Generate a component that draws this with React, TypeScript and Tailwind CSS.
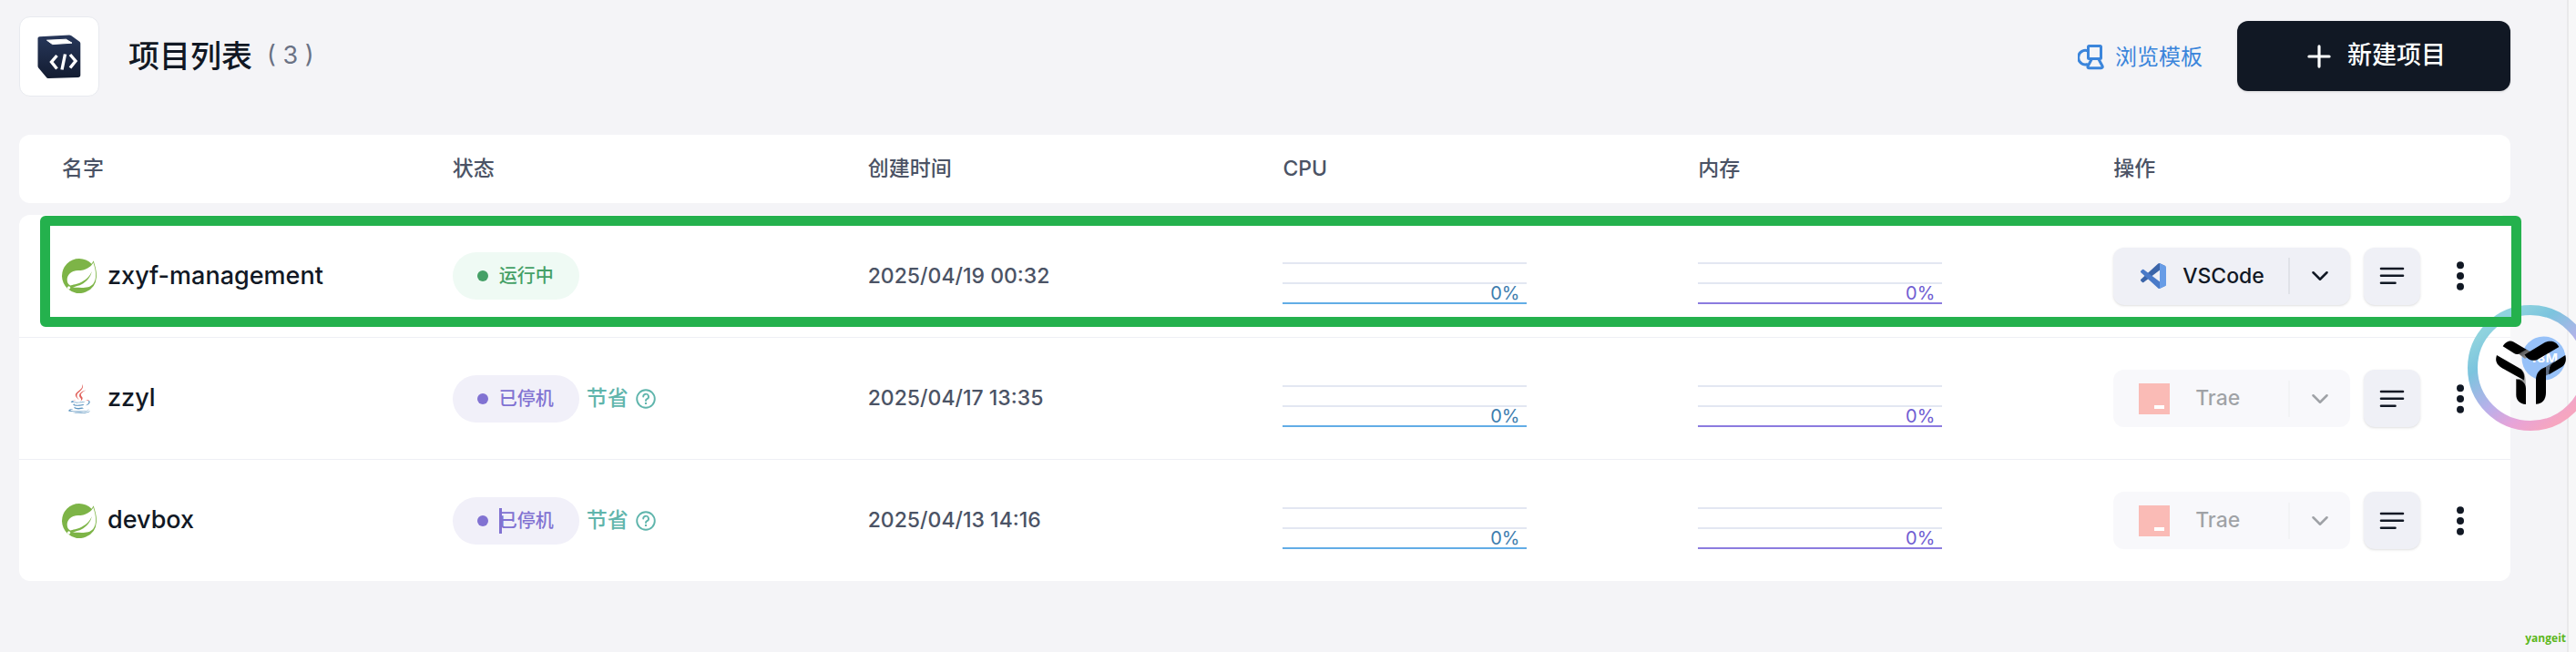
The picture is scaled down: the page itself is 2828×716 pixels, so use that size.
import { useId } from "react";
import { ChevronDown, Plus } from "lucide-react";
import { FaJava } from "react-icons/fa";
import { SiSpring } from "react-icons/si";

type Status = "running" | "stopped";
type Runtime = "spring" | "java";
type Ide = "vscode" | "trae";

interface Project {
  name: string;
  runtime: Runtime;
  status: Status;
  created: string;
  cpu: number;
  memory: number;
  ide: Ide;
  caret?: boolean;
}

const projects: Project[] = [
  { name: "zxyf-management", runtime: "spring", status: "running", created: "2025/04/19 00:32", cpu: 0, memory: 0, ide: "vscode" },
  { name: "zzyl", runtime: "java", status: "stopped", created: "2025/04/17 13:35", cpu: 0, memory: 0, ide: "trae" },
  { name: "devbox", runtime: "spring", status: "stopped", created: "2025/04/13 14:16", cpu: 0, memory: 0, ide: "trae", caret: true },
];

const columns = ["名字", "状态", "创建时间", "CPU", "内存", "操作"];

function DevboxLogo() {
  return (
    <svg viewBox="0 0 48 48" className="size-12" aria-hidden="true">
      <defs>
        <linearGradient id="devbox-face" x1="0" y1="0" x2="0" y2="1">
          <stop offset="0" stopColor="#27375a" />
          <stop offset="1" stopColor="#131c31" />
        </linearGradient>
      </defs>
      <path d="M2.5 2.200 35 .6c.9 0 1.700.2 2.400.7L46 7.400c.9.6 1.300 1.400 1.300 2.400v34.700c0 1.500-1 2.500-2.500 2.500L12.500 48c-1.300 0-2.200-.5-2.900-1.500L1.200 36.500c-.5-.7-.7-1.400-.7-2.200V4.300c0-1.200.7-2 2-2.100Z" fill="url(#devbox-face)" />
      <path d="M10.500 6.200 31.500 5.200 38 9.200 16.500 10.600Z" fill="#fff" stroke="#fff" strokeLinejoin="round" />
      <path d="m21.500 23-6 7 6 7.500M30.500 21.500l-3.500 17M36 22l6 7-6 7.500" fill="none" stroke="#fff" strokeWidth="3.400" />
    </svg>
  );
}

function TemplateIcon() {
  return (
    <svg viewBox="0 0 29 28" className="h-7 w-[29px]" fill="none" stroke="currentColor" strokeWidth="3" strokeLinejoin="round" aria-hidden="true">
      <rect x="11.500" y="1.500" width="14" height="14" rx="1" />
      <path d="m15.500 15.500-4.300 8c-.6 1.400 0 2.200 1.300 2.200h13.200c1.300 0 1.900-.9 1.300-2.200l-4.300-8" />
      <path d="M11 6.800A7.800 7.800 0 1 0 11 21.500" />
    </svg>
  );
}

function JavaIcon() {
  const id = useId();
  return (
    <>
      <svg className="absolute size-0" aria-hidden="true">
        <defs>
          <linearGradient id={id} x1="0" y1="0" x2="0" y2="1">
            <stop offset="0.550" stopColor="#e0605a" />
            <stop offset="0.550" stopColor="#5c94bf" />
          </linearGradient>
        </defs>
      </svg>
      <FaJava className="h-8 w-6" style={{ fill: `url(#${id})` }} aria-hidden="true" />
    </>
  );
}

function VSCodeIcon() {
  return (
    <svg viewBox="0 0 100 100" className="size-7" aria-hidden="true">
      <path fill="#3b65a9" d="M96.461 10.796 75.857.876a6.250 6.250 0 0 0-7.107 1.207L1.299 63.583a4.167 4.167 0 0 0 .004 6.162l5.510 5.009a4.167 4.167 0 0 0 5.321.236L93.361 13.370C96.086 11.303 100 13.246 100 16.667v-.240a6.250 6.250 0 0 0-3.539-5.631Z" />
      <path fill="#4a7ac8" d="m96.461 89.204-20.604 9.920a6.250 6.250 0 0 1-7.107-1.207L1.299 36.417a4.167 4.167 0 0 1 .004-6.162l5.510-5.009a4.167 4.167 0 0 1 5.321-.236L93.361 86.630C96.086 88.697 100 86.754 100 83.333v.240a6.250 6.250 0 0 1-3.539 5.631Z" />
      <path fill="#679ce6" d="M75.858 99.126a6.250 6.250 0 0 1-7.108-1.210c2.306 2.307 6.250.674 6.250-2.588V4.672c0-3.262-3.944-4.895-6.250-2.589a6.250 6.250 0 0 1 7.108-1.209l20.600 9.907A6.250 6.250 0 0 1 100 16.413v67.174a6.250 6.250 0 0 1-3.541 5.633Z" />
    </svg>
  );
}

function TraeIcon() {
  return (
    <svg viewBox="0 0 34 34" className="size-[34px]" aria-hidden="true">
      <rect width="34" height="34" fill="#f4584a" />
      <rect x="17" y="24" width="11" height="4" fill="#fff" />
    </svg>
  );
}

function HelpIcon() {
  return (
    <svg viewBox="0 0 22 22" className="size-[22px]" fill="none" stroke="currentColor" aria-hidden="true">
      <circle cx="11" cy="11" r="9.800" strokeWidth="1.900" />
      <path d="M8.200 8.500A2.900 2.900 0 1 1 12.300 11.200c-.9.400-1.300.9-1.300 1.900" strokeWidth="1.900" strokeLinecap="round" />
      <circle cx="11" cy="15.900" r="1.200" fill="currentColor" stroke="none" />
    </svg>
  );
}

function StatusCell({ status, caret }: { status: Status; caret?: boolean }) {
  const running = status === "running";
  return (
    <div className="flex items-center gap-2">
      <span className={`flex h-[52px] w-[139px] items-center gap-3 rounded-full pl-[27px] text-xl font-medium ${running ? "bg-[#effaf4] text-[#45a066]" : "bg-[#f1f0f9] text-[#8172d2]"}`}>
        <span className="size-3 shrink-0 rounded-full bg-current" />
        <span className="relative whitespace-nowrap">
          {caret && <span className="absolute inset-y-0 left-0 w-[3px] bg-current" />}
          {running ? "运行中" : "已停机"}
        </span>
      </span>
      {!running && (
        <span className="flex items-center gap-2 text-[23px] font-medium text-[#5fb5ac]">
          节省
          <button type="button" aria-label="说明">
            <HelpIcon />
          </button>
        </span>
      )}
    </div>
  );
}

function UsageChart({ value, tone }: { value: number; tone: "cpu" | "memory" }) {
  const cpu = tone === "cpu";
  return (
    <div className={`relative mt-4 flex h-[46px] w-[268px] flex-col justify-between ${cpu ? "text-[#3d7dae]" : "text-[#6f5dd2]"}`}>
      <span className="h-0.5 bg-[#e3e7f2]" />
      <span className="h-0.5 bg-[#e3e7f2]" />
      <span className={`h-0.5 ${cpu ? "bg-[#62ade6]" : "bg-[#8b7bdf]"}`} />
      <span className="absolute right-2 bottom-0 text-xl leading-6">{value}%</span>
    </div>
  );
}

function Actions({ project }: { project: Project }) {
  const vscode = project.ide === "vscode";
  return (
    <div className="flex items-center">
      <div className={`flex h-[63px] w-[260px] items-center rounded-xl bg-[#eff0f6] text-[#111824] ${vscode ? "shadow-sm" : "opacity-40"}`}>
        <button type="button" disabled={!vscode} className={`flex h-full flex-1 items-center text-[23px] font-medium ${vscode ? "gap-[18px] pl-[30px]" : "gap-7 pl-7"}`}>
          {vscode ? <VSCodeIcon /> : <TraeIcon />}
          {vscode ? "VSCode" : "Trae"}
        </button>
        <span className="h-10 w-0.5 bg-[#e0e2e8]" />
        <button type="button" disabled={!vscode} aria-label="选择编辑器" className="flex h-full w-[66px] items-center justify-center">
          <ChevronDown className="size-[30px]" strokeWidth={2} />
        </button>
      </div>
      <button type="button" aria-label="详情" className="ml-[15px] flex h-[63px] w-[62px] items-center justify-center rounded-xl bg-[#eff0f6] text-[#111824] shadow-sm">
        <svg viewBox="0 0 28 20" className="h-5 w-7" stroke="currentColor" strokeWidth="2.600" strokeLinecap="round" aria-hidden="true">
          <path d="M2 2h24M2 9.800h24M2 17.800h15.500" />
        </svg>
      </button>
      <button type="button" aria-label="更多" className="ml-9 text-[#111824]">
        <svg viewBox="0 0 16 32" className="h-8 w-4" fill="currentColor" aria-hidden="true">
          <circle cx="8" cy="4.200" r="4" />
          <circle cx="8" cy="16" r="4" />
          <circle cx="8" cy="27.800" r="4" />
        </svg>
      </button>
    </div>
  );
}

function FloatingBadge() {
  return (
    <svg viewBox="0 0 138 138" className="absolute top-[335px] -right-[19px] size-[138px]" aria-hidden="true">
      <defs>
        <linearGradient id="ring" x1="0.150" y1="0.150" x2="0.750" y2="0.950">
          <stop offset="0" stopColor="#8fd3de" />
          <stop offset="0.220" stopColor="#7cc4de" />
          <stop offset="0.550" stopColor="#b9b0ea" />
          <stop offset="0.780" stopColor="#e7a3d8" />
          <stop offset="1" stopColor="#f6a6c0" />
        </linearGradient>
        <linearGradient id="fold" x1="0" y1="0" x2="1" y2="1">
          <stop offset="0" stopColor="#333" />
          <stop offset="1" stopColor="#bbb" />
        </linearGradient>
      </defs>
      <circle cx="69" cy="69" r="58" fill="#fff" fillOpacity="0.250" />
      <circle cx="69" cy="69" r="63.500" fill="none" stroke="url(#ring)" strokeWidth="11" />
      <circle cx="83.500" cy="58.500" r="24" fill="#97c1f8" />
      <text x="68" y="62.500" fill="#fff" fontFamily="Open Sans, sans-serif" fontWeight="700" fontSize="15">18M</text>
      <path d="M64 48.500 73 53l-10 6-7-5.500Z" fill="url(#fold)" />
      <path d="M57.500 69.500C62 72 64 77 64 90L55 81l6 1Z" fill="url(#fold)" />
      <path d="M84 69l11-7-6 8v6l-4 2Z" fill="#5c6a80" />
      <path d="M38.700 45.300C41 41 46 38 50.500 40.500L64.500 48.700 56 53.700c-2 .5-3.500.2-5-.700Z" />
      <path d="M62.500 54.500 84 41.500c5-3 13-3 16.300 4.500L77.700 59.300c-5 3-11.500 1.700-15.200-4.800Z" />
      <path d="M32 55 55 68.200c6 3.500 8 8 6.800 14.300L37.500 69c-6-4-7.500-8-5.500-14Z" />
      <path d="M53.300 81.300C60 82.500 64 86 64 92v17c-7-.5-10.700-4.500-10.700-10.500Z" />
      <path d="M86 68v28c0 8-4 12.700-11 12.700V82c0-7 4-12 11-14Z" />
      <path d="M107.300 55c1.500 6 0 10.500-4 13L89.300 76.300c-.5-7 1.500-11.300 6-13.800Z" />
    </svg>
  );
}

export default function App() {
  return (
    <div className="relative flex min-h-screen overflow-hidden bg-[#f4f4f7] font-['Inter','Noto_Sans_CJK_SC',sans-serif] text-[#111824]">
      <main className="min-w-0 flex-1 pr-[62px] pb-10 pl-[21px]">
        <header className="flex items-start pt-[18px]">
          <div className="flex size-[88px] items-center justify-center rounded-xl border border-[#e8eaef] bg-white">
            <DevboxLogo />
          </div>
          <h1 className="ml-8 flex h-[86px] items-center text-[34px] font-medium">
            项目列表
            <span className="ml-4 text-[27px] font-normal text-[#6a7284]">( 3 )</span>
          </h1>
          <div className="mt-[5px] ml-auto flex items-center">
            <a href="#templates" className="mr-[38px] flex items-center gap-3 pt-0.5 text-[24px] text-[#3b85db]">
              <TemplateIcon />
              浏览模板
            </a>
            <button type="button" className="flex h-[77px] w-[300px] items-center justify-center gap-3 rounded-xl bg-[#111824] text-[27px] font-medium text-white shadow-sm">
              <Plus className="size-[38px]" strokeWidth={2} />
              新建项目
            </button>
          </div>
        </header>

        <div className="relative mt-[42px]">
          <table className="w-full table-fixed border-separate border-spacing-0 text-left">
            <thead>
              <tr>
                {columns.map((label) => (
                  <th key={label} scope="col" className="h-[75px] bg-white px-5 text-[23px] font-medium text-[#4b5365] first:rounded-l-xl first:pl-[47px] last:rounded-r-xl">
                    {label}
                  </th>
                ))}
              </tr>
            </thead>
            <tbody className="before:block before:h-[13px] before:content-[''] [&>tr:first-child>td:first-child]:rounded-tl-xl [&>tr:first-child>td:last-child]:rounded-tr-xl [&>tr:first-child>td]:border-t-0 [&>tr:last-child>td:first-child]:rounded-bl-xl [&>tr:last-child>td:last-child]:rounded-br-xl [&>tr>td]:h-[134px] [&>tr>td]:border-t [&>tr>td]:border-[#eeeff5] [&>tr>td]:bg-white [&>tr>td]:px-5">
              {projects.map((project) => (
                <tr key={project.name}>
                  <td>
                    <div className="flex items-center gap-3 pl-[27px] text-[27px] font-medium">
                      <span className="flex w-[38px] justify-center">
                        {project.runtime === "spring" ? <SiSpring className="size-[38px] text-[#7db447]" aria-hidden="true" /> : <JavaIcon />}
                      </span>
                      {project.name}
                    </div>
                  </td>
                  <td>
                    <StatusCell status={project.status} caret={project.caret} />
                  </td>
                  <td className="text-[23px] font-medium text-[#4b5365]">{project.created}</td>
                  <td>
                    <UsageChart value={project.cpu} tone="cpu" />
                  </td>
                  <td>
                    <UsageChart value={project.memory} tone="memory" />
                  </td>
                  <td>
                    <Actions project={project} />
                  </td>
                </tr>
              ))}
            </tbody>
          </table>
          <div className="pointer-events-none absolute top-[89px] -right-3 left-[23px] z-10 h-[122px] rounded-md border-[11px] border-[#24b14d]" />
        </div>
      </main>
      <div className="w-[10px] shrink-0 border-l-2 border-[#e9e9eb] bg-[#f7f7f8]" />
      <FloatingBadge />
      <span className="absolute right-[11px] bottom-[7px] font-['Open_Sans',sans-serif] text-xs font-bold text-[#5cb71c]">yangeit</span>
    </div>
  );
}
